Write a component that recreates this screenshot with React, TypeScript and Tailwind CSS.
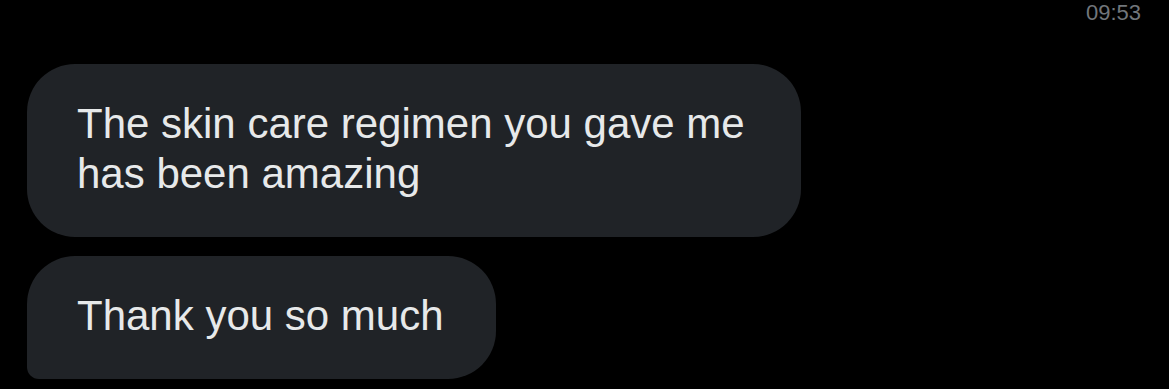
import React from 'react';

const messages = [
  { id: 1, text: 'The skin care regimen you gave me has been amazing', width: 'w-[774px]', last: false },
  { id: 2, text: 'Thank you so much', width: 'w-fit', last: true },
];

export default function App() {
  return (
    <div className="w-[1169px] h-[389px] bg-black overflow-hidden font-['Liberation_Sans',Arial,sans-serif]">
      <div className="flex justify-end pr-[28px] pt-[1px] h-[64px]">
        <span className="text-[22px] leading-[24px] text-[#71767b]">09:53</span>
      </div>
      <div className="flex flex-col items-start gap-[19px] pl-[27px]">
        {messages.map((m) => (
          <div
            key={m.id}
            className={`${m.width} bg-[#202327] text-[#e7e9ea] text-[42px] leading-[50px] pl-[50px] pr-[52px] pt-[35px] pb-[38px] rounded-[48px] ${m.last ? 'rounded-bl-[12px]' : ''}`}
          >
            {m.text}
          </div>
        ))}
      </div>
    </div>
  );
}
